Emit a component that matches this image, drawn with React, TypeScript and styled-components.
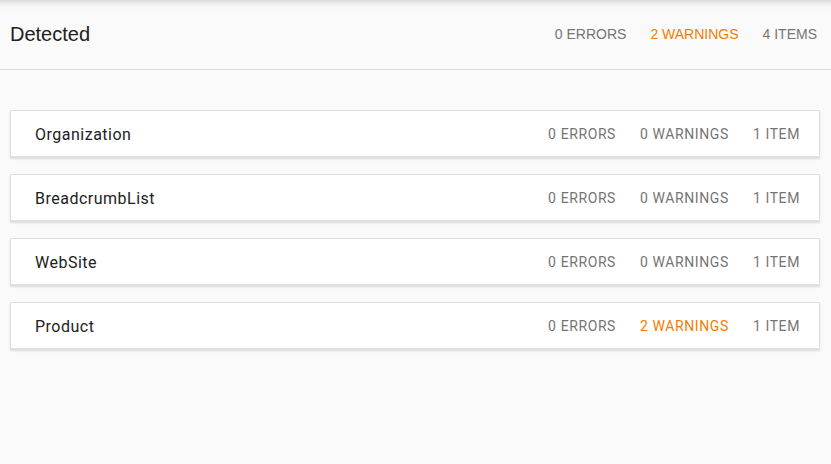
import styled, { createGlobalStyle } from 'styled-components';

const GlobalStyle = createGlobalStyle`
  html, body {
    margin: 0;
    padding: 0;
    background: #fafafa;
  }
  body {
    font-family: Roboto, "Liberation Sans", sans-serif;
  }
`;

type Entity = { name: string; errors: number; warnings: number; items: number };

const entities: Entity[] = [
  { name: 'Organization', errors: 0, warnings: 0, items: 1 },
  { name: 'BreadcrumbList', errors: 0, warnings: 0, items: 1 },
  { name: 'WebSite', errors: 0, warnings: 0, items: 1 },
  { name: 'Product', errors: 0, warnings: 2, items: 1 },
];

const plural = (n: number, word: string) => `${n} ${word}${n === 1 ? '' : 'S'}`;

const App = () => {
  const totalErrors = entities.reduce((s, e) => s + e.errors, 0);
  const totalWarnings = entities.reduce((s, e) => s + e.warnings, 0);

  return (
    <>
      <GlobalStyle />
      <Page>
        <Header>
          <Title>Detected</Title>
          <HeaderStats>
            <HeaderStat>{plural(totalErrors, 'ERROR')}</HeaderStat>
            <HeaderStat $warn={totalWarnings > 0}>{plural(totalWarnings, 'WARNING')}</HeaderStat>
            <HeaderStat>{plural(entities.length, 'ITEM')}</HeaderStat>
          </HeaderStats>
        </Header>
        <List>
          {entities.map((e) => (
            <Card key={e.name}>
              <Name>{e.name}</Name>
              <Stats>
                <Stat>{plural(e.errors, 'ERROR')}</Stat>
                <Stat $warn={e.warnings > 0}>{plural(e.warnings, 'WARNING')}</Stat>
                <Stat>{plural(e.items, 'ITEM')}</Stat>
              </Stats>
            </Card>
          ))}
        </List>
      </Page>
    </>
  );
};

export default App;

const Page = styled.div`
  width: 100%;
  min-height: 100vh;
  background: #fafafa;
`;

const Header = styled.header`
  height: 69px;
  display: flex;
  align-items: center;
  justify-content: space-between;
  padding: 0 14px 0 10px;
  border-bottom: 1px solid #dcdcdc;
  background: linear-gradient(to bottom, #d9d9d9 0px, #ececec 3px, #f7f7f7 7px, #fafafa 10px);
  font-family: "Liberation Sans", Arial, sans-serif;
`;

const Title = styled.h1`
  margin: 0;
  font-size: 20px;
  font-weight: 400;
  color: #212121;
`;

const HeaderStats = styled.div`
  display: flex;
  gap: 24px;
  margin-bottom: 1px;
`;

const HeaderStat = styled.span<{ $warn?: boolean }>`
  font-size: 14px;
  color: ${(p) => (p.$warn ? '#f57c00' : '#757575')};
`;

const List = styled.div`
  display: flex;
  flex-direction: column;
  gap: 17px;
  padding: 40px 11px 0 10px;
`;

const Card = styled.div`
  height: 45px;
  display: flex;
  align-items: center;
  justify-content: space-between;
  padding: 1px 19px 0 24px;
  box-sizing: border-box;
  height: 47px;
  background: #fff;
  border: 1px solid #e0e0e0;
  box-shadow: 0 2px 2px rgba(0, 0, 0, 0.12);
`;

const Name = styled.div`
  font-size: 16px;
  letter-spacing: 0.5px;
  color: #212121;
`;

const Stats = styled.div`
  display: flex;
  gap: 24px;
`;

const Stat = styled.span<{ $warn?: boolean }>`
  font-size: 14px;
  letter-spacing: 0.6px;
  color: ${(p) => (p.$warn ? '#f57c00' : '#757575')};
`;
